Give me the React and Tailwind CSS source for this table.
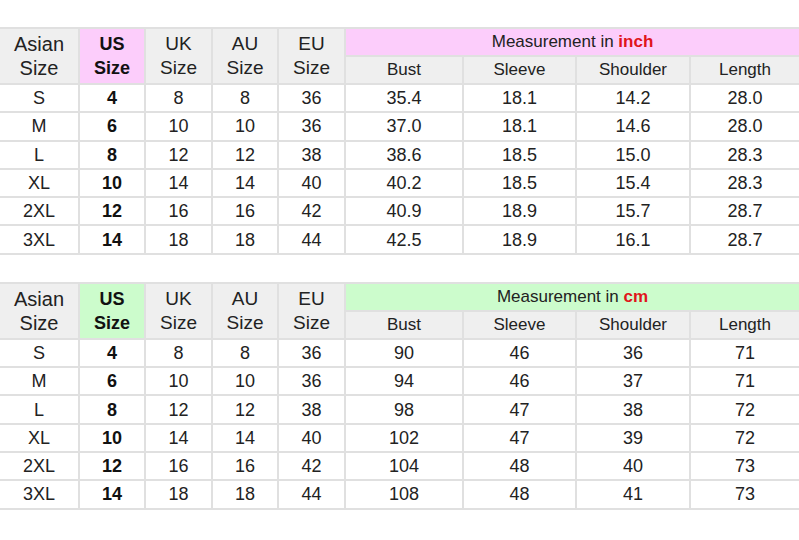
import React from 'react'

const inchRows = [
  ['S', '4', '8', '8', '36', '35.4', '18.1', '14.2', '28.0'],
  ['M', '6', '10', '10', '36', '37.0', '18.1', '14.6', '28.0'],
  ['L', '8', '12', '12', '38', '38.6', '18.5', '15.0', '28.3'],
  ['XL', '10', '14', '14', '40', '40.2', '18.5', '15.4', '28.3'],
  ['2XL', '12', '16', '16', '42', '40.9', '18.9', '15.7', '28.7'],
  ['3XL', '14', '18', '18', '44', '42.5', '18.9', '16.1', '28.7'],
]

const cmRows = [
  ['S', '4', '8', '8', '36', '90', '46', '36', '71'],
  ['M', '6', '10', '10', '36', '94', '46', '37', '71'],
  ['L', '8', '12', '12', '38', '98', '47', '38', '72'],
  ['XL', '10', '14', '14', '40', '102', '47', '39', '72'],
  ['2XL', '12', '16', '16', '42', '104', '48', '40', '73'],
  ['3XL', '14', '18', '18', '44', '108', '48', '41', '73'],
]

const widths = [79, 66, 67, 66, 67, 118, 113, 114, 109]

function SizeTable({ unit, rows, accent }) {
  const cell = 'border-2 border-[#e0e0e0] text-center align-middle p-0'
  return (
    <table className="border-collapse table-fixed w-[799px] text-[#222]" style={{ fontFamily: '"Liberation Sans", Arial, sans-serif' }}>
      <colgroup>
        {widths.map((w, i) => (
          <col key={i} style={{ width: w }} />
        ))}
      </colgroup>
      <thead>
        <tr className="h-[28px]">
          <th rowSpan={2} className={`${cell} border-l-0 bg-[#efefef] font-normal text-[20px] leading-[24px]`}>
            Asian<br />Size
          </th>
          <th rowSpan={2} className={`${cell} ${accent} font-bold text-[18px] leading-[24px] text-[#111]`}>
            US<br />Size
          </th>
          <th rowSpan={2} className={`${cell} bg-[#efefef] font-normal text-[19px] leading-[24px]`}>
            UK<br />Size
          </th>
          <th rowSpan={2} className={`${cell} bg-[#efefef] font-normal text-[19px] leading-[24px]`}>
            AU<br />Size
          </th>
          <th rowSpan={2} className={`${cell} bg-[#efefef] font-normal text-[19px] leading-[24px]`}>
            EU<br />Size
          </th>
          <th colSpan={4} className={`${cell} border-r-0 ${accent} font-normal text-[17px] leading-[20px]`}>
            Measurement in <span className="font-bold text-[#e0151b]">{unit}</span>
          </th>
        </tr>
        <tr className="h-[28px]">
          {['Bust', 'Sleeve', 'Shoulder', 'Length'].map((h, i) => (
            <th key={h} className={`${cell} ${i === 3 ? 'border-r-0' : ''} bg-[#efefef] font-normal text-[17px] leading-[20px]`}>
              {h}
            </th>
          ))}
        </tr>
      </thead>
      <tbody>
        {rows.map((r) => (
          <tr key={r[0]} className="h-[28.3px]">
            {r.map((v, i) => (
              <td
                key={i}
                className={`${cell} ${i === 0 ? 'border-l-0' : ''} ${i === 8 ? 'border-r-0' : ''} text-[18px] leading-[20px] ${i === 1 ? 'font-bold text-[#111]' : ''}`}
              >
                {v}
              </td>
            ))}
          </tr>
        ))}
      </tbody>
    </table>
  )
}

export default function App() {
  return (
    <div className="w-[799px] h-[540px] bg-white overflow-hidden pt-[27px] flex flex-col gap-[27px]">
      <SizeTable unit="inch" rows={inchRows} accent="bg-[#fccdfb]" />
      <SizeTable unit="cm" rows={cmRows} accent="bg-[#ccfccc]" />
    </div>
  )
}
